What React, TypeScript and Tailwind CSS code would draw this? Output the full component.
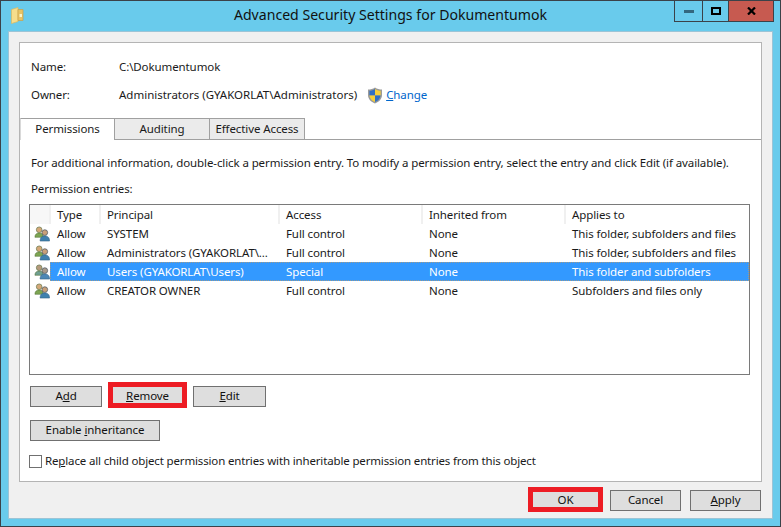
const FONT = "font-['Noto_Sans','Open_Sans',sans-serif]";

const columns = [
  { label: "", width: "w-[21px]" },
  { label: "Type", width: "w-[50px]" },
  { label: "Principal", width: "w-[179px]" },
  { label: "Access", width: "w-[143px]" },
  { label: "Inherited from", width: "w-[143px]" },
  { label: "Applies to", width: "flex-1" },
];

const rows = [
  { type: "Allow", principal: "SYSTEM", access: "Full control", inherited: "None", applies: "This folder, subfolders and files" },
  { type: "Allow", principal: "Administrators (GYAKORLAT\\...", access: "Full control", inherited: "None", applies: "This folder, subfolders and files" },
  { type: "Allow", principal: "Users (GYAKORLAT\\Users)", access: "Special", inherited: "None", applies: "This folder and subfolders", selected: true },
  { type: "Allow", principal: "CREATOR OWNER", access: "Full control", inherited: "None", applies: "Subfolders and files only" },
];

function FolderIcon() {
  return (
    <svg width="13" height="17" viewBox="0 0 13 17">
      <path d="M0.5 2.5 L7 0.5 V14.5 L0.5 16.5 Z" fill="#f6dd8c" stroke="#dcb95c" strokeWidth="0.7" />
      <path d="M7 2.5 H12 V13.5 H7 Z" fill="#e8c465" stroke="#c9a24a" strokeWidth="0.7" />
      <rect x="8.5" y="7" width="2.5" height="3" fill="#fdf3c4" />
    </svg>
  );
}

function ShieldIcon() {
  return (
    <svg width="16" height="17" viewBox="0 0 16 17">
      <path d="M8 .5 C10 2 12.5 2.6 15 2.6 V8 C15 12 12 15 8 16.5 C4 15 1 12 1 8 V2.6 C3.5 2.6 6 2 8 .5 Z" fill="#9a9a9a" />
      <path d="M8 2 V8.5 H2.4 V3.8 C4.4 3.7 6.4 3.2 8 2 Z" fill="#2f6fc4" />
      <path d="M8 2 C9.6 3.2 11.6 3.7 13.6 3.8 V8.5 H8 Z" fill="#f5cf3a" />
      <path d="M2.4 8.5 H8 V15 C5 13.8 2.7 11.5 2.4 8.5 Z" fill="#f5cf3a" />
      <path d="M8 8.5 H13.6 C13.3 11.5 11 13.8 8 15 Z" fill="#2f6fc4" />
    </svg>
  );
}

function UsersIcon({ selected }: { selected?: boolean }) {
  return (
    <svg width="16" height="16" viewBox="0 0 17 17">
      <circle cx="5.5" cy="4" r="3" fill={selected ? "#b59a7c" : "#d4a878"} stroke="#6d7f55" strokeWidth="0.8" />
      <path d="M1 12 C1 8.5 3 7.5 5.5 7.5 C8 7.5 10 8.5 10 12 Z" fill={selected ? "#6f9f90" : "#7da552"} stroke="#55743a" strokeWidth="0.6" />
      <circle cx="11.5" cy="7" r="3" fill={selected ? "#a99a8a" : "#c99f78"} stroke="#4e5a66" strokeWidth="0.8" />
      <path d="M6.5 16 C6.5 12 8.5 10.5 11.5 10.5 C14.5 10.5 16.5 12 16.5 16 Z" fill={selected ? "#4d87b5" : "#3f80ad"} stroke="#2f5f85" strokeWidth="0.6" />
    </svg>
  );
}

function Button({ children, width, frame }: { children: React.ReactNode; width: string; frame?: string }) {
  return (
    <div className={`relative ${width} h-[21px]`}>
      <button className="flex h-full w-full items-center justify-center border border-[#707070] bg-[#dedede] pb-[1px] text-[11.5px] tracking-[-0.1px] text-[#111]">
        <span>{children}</span>
      </button>
      {frame && <div className={`absolute border-[5px] border-[#ed1c24] ${frame}`} />}
    </div>
  );
}

function Tab({ label, active }: { label: string; active?: boolean }) {
  return (
    <div
      className={`flex h-[22px] w-[95px] items-center justify-center border-t border-r border-[#a0a0a0] pb-[1px] text-[11.5px] tracking-[-0.1px] ${
        active ? "border-l border-l-[#d9d9d9] bg-white" : "border-b bg-[#ebebeb]"
      }`}
    >
      {label}
    </div>
  );
}

export default function App() {
  return (
    <div className={`${FONT} flex h-[527px] w-[781px] flex-col overflow-hidden border border-[#3b4249] bg-[#69cbec] text-[11.5px] leading-none tracking-[-0.1px] text-[#1a1a1a]`}>
      {/* Title bar */}
      <div className="grid h-[30px] grid-cols-[110px_1fr_110px]">
        <div className="flex items-center pb-[1px] pl-[10px]">
          <FolderIcon />
        </div>
        <div className="flex items-center justify-center pb-[1px] text-[14.1px] tracking-normal text-[#111]">
          Advanced Security Settings for Dokumentumok
        </div>
        <div className="flex items-start justify-end pr-[6px]">
          <div className="flex h-[21px] w-[28px] items-center justify-center border-b border-l border-[#3b4249]">
            <div className="h-[3px] w-[10px] bg-[#33687f]" />
          </div>
          <div className="flex h-[21px] w-[26px] items-center justify-center border-b border-l border-[#3b4249]">
            <div className="h-[8px] w-[10px] border-2 border-black" />
          </div>
          <div className="flex h-[21px] w-[46px] items-center justify-center border-x border-b border-[#3b4249] bg-[#c75a50]">
            <svg width="9" height="8" viewBox="0 0 9 8">
              <path d="M1 0.5 L8 7.5 M8 0.5 L1 7.5" stroke="#000" strokeWidth="2.2" />
            </svg>
          </div>
        </div>
      </div>

      {/* Dialog body */}
      <div className="mx-[7px] flex h-[488px] flex-col border border-[#9cc4d6] bg-[#f0f0f0] pt-[10px] pl-[10px] pr-[11px]">
        <div className="flex h-[440px] w-[743px] flex-col border border-[#b4b4b4] bg-white">
          <div className="flex h-[32px] items-center pl-[11px] pt-[16px]">
            <span className="w-[88px]">Name:</span>
            <span>C:\Dokumentumok</span>
          </div>
          <div className="mt-[12px] flex h-[16px] items-center pl-[11px]">
            <span className="w-[88px]">Owner:</span>
            <span className="tracking-normal">Administrators (GYAKORLAT\Administrators)</span>
            <span className="ml-[10px]"><ShieldIcon /></span>
            <span className="ml-[3px] text-[#0066cc]">
              <u>C</u>hange
            </span>
          </div>

          {/* Tabs */}
          <div className="mt-[15px] flex h-[22px] border-b border-[#a0a0a0]">
            <Tab label="Permissions" active />
            <Tab label="Auditing" />
            <Tab label="Effective Access" />
          </div>

          <div className="mt-[17px] flex flex-col pl-[9px] pr-[11px]">
            <p className="h-[14px] whitespace-nowrap pl-[2px]">
              For additional information, double-click a permission entry. To modify a permission entry, select the entry and click Edit (if available).
            </p>
            <p className="mt-[12px] h-[14px] pl-[2px]">Permission entries:</p>

            {/* Permission list */}
            <div className="mt-[7px] h-[171px] border border-[#7a7a7a]">
              <div className="flex h-[19px]">
                {columns.map((col, i) => (
                  <div
                    key={i}
                    className={`${col.width} flex items-center border-r-2 border-[#f0f0f0] pl-[6px] last:border-r-0 ${i === 0 ? "bg-[#f7f7f7]" : ""}`}
                  >
                    {col.label}
                  </div>
                ))}
              </div>
              {rows.map((row, i) => (
                <div key={i} className="flex h-[19px] items-center">
                  <div className="flex w-[20px] justify-end">
                    <UsersIcon selected={row.selected} />
                  </div>
                  <div className={`flex h-full flex-1 items-center ${row.selected ? "bg-[#3399ff] text-white outline-1 -outline-offset-1 outline-dotted outline-[#9c9a8c]" : ""}`}>
                    <span className="w-[51px] pl-[7px]">{row.type}</span>
                    <span className="w-[179px] pl-[6px]">{row.principal}</span>
                    <span className="w-[143px] pl-[6px]">{row.access}</span>
                    <span className="w-[143px] pl-[6px]">{row.inherited}</span>
                    <span className="flex-1 pl-[6px]">{row.applies}</span>
                  </div>
                </div>
              ))}
            </div>

            <div className="mt-[11px] flex pl-[1px]">
              <Button width="w-[72px]">A<u>d</u>d</Button>
              <div className="ml-[8px]">
                <Button width="w-[75px]" frame="-left-[2px] -right-[2px] -top-[4px] -bottom-[1px]"><u>R</u>emove</Button>
              </div>
              <div className="ml-[8px]">
                <Button width="w-[73px]"><u>E</u>dit</Button>
              </div>
            </div>
            <div className="mt-[13px] pl-[1px]">
              <Button width="w-[130px]">Enable <u>i</u>nheritance</Button>
            </div>
            <label className="mt-[14px] flex items-center">
              <span className="h-[13px] w-[13px] border border-[#707070] bg-white" />
              <span className="ml-[3px] pb-[1px] tracking-[-0.15px]">Re<u>p</u>lace all child object permission entries with inheritable permission entries from this object</span>
            </label>
          </div>
        </div>

        {/* Dialog buttons */}
        <div className="mt-[8px] flex justify-end gap-[9px]">
          <Button width="w-[71px]" frame="-left-[2px] -right-[2px] -top-[3px] -bottom-[1px]">OK</Button>
          <Button width="w-[71px]">Cancel</Button>
          <Button width="w-[71px]"><u>A</u>pply</Button>
        </div>
      </div>
    </div>
  );
}
